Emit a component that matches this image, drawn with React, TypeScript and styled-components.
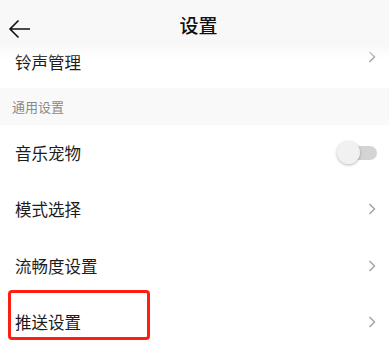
import React from 'react'
import styled, { createGlobalStyle } from 'styled-components'

const GlobalStyle = createGlobalStyle`
  html, body {
    margin: 0;
    padding: 0;
    background: #ffffff;
  }
  body {
    font-family: 'Noto Sans CJK SC', 'Noto Sans', sans-serif;
    color: #1c1c1c;
  }
`

const Page = styled.div`
  width: 389px;
  height: 349px;
  overflow: hidden;
  background: #ffffff;
`

const Header = styled.header`
  position: relative;
  display: flex;
  align-items: center;
  justify-content: center;
  height: 44px;
  padding-top: 2px;
  background: #f8f8f8;
`

const BackButton = styled.button`
  position: absolute;
  left: 8px;
  top: 19px;
  display: flex;
  padding: 0;
  border: 0;
  background: none;
`

const Title = styled.h1`
  margin: 0 0 0 8px;
  font-size: 19px;
  font-weight: 500;
  color: #111;
`

const Row = styled.div<{ $height?: number; $partial?: boolean }>`
  position: relative;
  display: flex;
  align-items: ${({ $partial }) => ($partial ? 'flex-start' : 'center')};
  justify-content: space-between;
  height: ${({ $height }) => $height ?? 56.5}px;
  padding: ${({ $partial }) => ($partial ? '5px 13px 0 15px' : '0 13px 0 15px')};
  box-sizing: border-box;
  background: #ffffff;
`

const Fade = styled.div`
  position: absolute;
  left: 0;
  right: 0;
  top: 0;
  height: 13px;
  background: linear-gradient(rgba(248, 248, 248, 0.85), rgba(255, 255, 255, 0));
  pointer-events: none;
`

const Label = styled.span`
  font-size: 16.5px;
  line-height: 22px;
  color: #1c1c1c;
`

const SectionTitle = styled.div`
  display: flex;
  align-items: center;
  height: 36.5px;
  padding-left: 12px;
  background: #f9f9f9;
  font-size: 13px;
  color: #8a8a8a;
`

const Toggle = styled.div`
  position: relative;
  width: 28px;
  height: 14px;
  margin-right: -1px;
  border-radius: 7px;
  background: #d4d4d4;
`

const Knob = styled.div`
  position: absolute;
  left: -12px;
  top: -5px;
  width: 23px;
  height: 23px;
  border-radius: 50%;
  background: #f1f1f1;
  box-shadow: 0 1px 3px rgba(0, 0, 0, 0.28);
`

const Highlight = styled.div`
  position: absolute;
  left: 8px;
  top: -4px;
  width: 142px;
  height: 50px;
  box-sizing: border-box;
  border: 3px solid #ff1f12;
  border-radius: 4px;
  pointer-events: none;
`

const Chevron = () => (
  <svg width="8" height="12" viewBox="0 0 8 12">
    <path d="M1.5 1 L6.5 6 L1.5 11" fill="none" stroke="#a0a0a0" strokeWidth="1.4" />
  </svg>
)

const BackArrow = () => (
  <svg width="23" height="20" viewBox="0 0 23 20">
    <path d="M22 10 H2 M10.5 1.5 L2 10 L10.5 18.5" fill="none" stroke="#111" strokeWidth="1.6" />
  </svg>
)

const App: React.FC = () => (
  <Page>
    <GlobalStyle />
    <Header>
      <BackButton aria-label="返回">
        <BackArrow />
      </BackButton>
      <Title>设置</Title>
    </Header>
    <Row $height={42} $partial>
      <Label>铃声管理</Label>
      <Chevron />
      <Fade />
    </Row>
    <SectionTitle>通用设置</SectionTitle>
    <Row>
      <Label>音乐宠物</Label>
      <Toggle>
        <Knob />
      </Toggle>
    </Row>
    <Row>
      <Label>模式选择</Label>
      <Chevron />
    </Row>
    <Row>
      <Label>流畅度设置</Label>
      <Chevron />
    </Row>
    <Row>
      <Label>推送设置</Label>
      <Chevron />
      <Highlight />
    </Row>
  </Page>
)

export default App
